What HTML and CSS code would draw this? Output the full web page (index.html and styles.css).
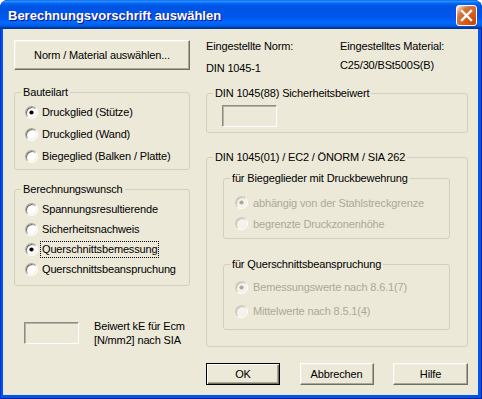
FILE: index.html
```html
<!DOCTYPE html>
<html lang="de">
<head>
<meta charset="utf-8">
<title>Berechnungsvorschrift auswählen</title>
<link rel="stylesheet" href="styles.css">
</head>
<body>
<div class="window">
  <div class="titlebar">
    <span class="title">Berechnungsvorschrift auswählen</span>
    <span class="close">
      <svg width="21" height="21" viewBox="0 0 21 21"><path d="M6 6 L15 15 M15 6 L6 15" stroke="#fff" stroke-width="2.4" stroke-linecap="square"/></svg>
    </span>
  </div>
  <div class="client">
    <div class="col-left">
      <div class="btn btn-wide">Norm / Material auswählen...</div>
      <div class="group g-bauteil">
        <span class="legend">Bauteilart</span>
        <div class="opt"><span class="radio checked"></span><span>Druckglied (Stütze)</span></div>
        <div class="opt"><span class="radio"></span><span>Druckglied (Wand)</span></div>
        <div class="opt"><span class="radio"></span><span>Biegeglied (Balken / Platte)</span></div>
      </div>
      <div class="group g-wunsch">
        <span class="legend">Berechnungswunsch</span>
        <div class="opt"><span class="radio"></span><span>Spannungsresultierende</span></div>
        <div class="opt"><span class="radio"></span><span>Sicherheitsnachweis</span></div>
        <div class="opt"><span class="radio checked"></span><span class="focus">Querschnittsbemessung</span></div>
        <div class="opt"><span class="radio"></span><span>Querschnittsbeanspruchung</span></div>
      </div>
      <div class="ke-row">
        <span class="edit"></span>
        <span class="ke-text">Beiwert kE für Ecm<br>[N/mm2] nach SIA</span>
      </div>
    </div>
    <div class="col-right">
      <div class="info">
        <span>Eingestellte Norm:</span>
        <span>Eingestelltes Material:</span>
        <span class="val-norm">DIN 1045-1</span>
        <span class="val-mat">C25/30/BSt500S(B)</span>
      </div>
      <div class="group g-sicher">
        <span class="legend">DIN 1045(88) Sicherheitsbeiwert</span>
        <span class="edit"></span>
      </div>
      <div class="group g-din">
        <span class="legend">DIN 1045(01) / EC2 / ÖNORM / SIA 262</span>
        <div class="group inner g-biege">
          <span class="legend">für Biegeglieder mit Druckbewehrung</span>
          <div class="opt dis"><span class="radio checked"></span><span>abhängig von der Stahlstreckgrenze</span></div>
          <div class="opt dis"><span class="radio"></span><span>begrenzte Druckzonenhöhe</span></div>
        </div>
        <div class="group inner g-quer">
          <span class="legend">für Querschnittsbeanspruchung</span>
          <div class="opt dis"><span class="radio checked"></span><span>Bemessungswerte nach 8.6.1(7)</span></div>
          <div class="opt dis"><span class="radio"></span><span>Mittelwerte nach 8.5.1(4)</span></div>
        </div>
      </div>
      <div class="buttons">
        <div class="btn btn-default">OK</div>
        <div class="btn">Abbrechen</div>
        <div class="btn btn-hilfe">Hilfe</div>
      </div>
    </div>
  </div>
</div>
</body>
</html>
```
FILE: styles.css
```css
* { box-sizing: border-box; }
html, body { margin: 0; padding: 0; background: #fff; }
body { font-family: "Liberation Sans", Arial, sans-serif; font-size: 11px; letter-spacing: -0.15px; color: #000; }

.window {
  width: 482px;
  height: 399px;
  background: #0055EA;
  border-radius: 8px 8px 0 0;
  box-shadow: inset 1px 0 #0831D9, inset -1px 0 #001EA0, inset 0 -1px #001EA0;
  display: flex;
  flex-direction: column;
  overflow: hidden;
}

.titlebar {
  height: 29px;
  flex: none;
  display: flex;
  align-items: center;
  justify-content: space-between;
  padding: 0 5px 0 8px;
  border-radius: 8px 8px 0 0;
  background: linear-gradient(to bottom, #0058EE 0%, #3593FF 4%, #288EFF 6%, #127DFF 8%, #036FFC 10%, #0262EE 14%, #0057E5 20%, #0054E3 24%, #0055EB 56%, #005BF5 66%, #026AFE 76%, #0062EF 86%, #0052D6 92%, #0040AB 94%, #003092 100%);
}

.title {
  color: #fff;
  font-family: "Liberation Sans", Arial, sans-serif;
  font-weight: bold;
  font-size: 13px;
  letter-spacing: 0;
  text-shadow: 1px 1px #0F1089;
  padding-top: 2px;
}

.close {
  width: 21px;
  height: 21px;
  border: 1px solid #fff;
  border-radius: 3px;
  background: radial-gradient(circle at 90% 90%, #cc4600 0%, #dc6527 55%, #cd7546 70%, #ffccb2 90%, #fff 100%);
  display: flex;
  align-items: center;
  justify-content: center;
  margin-top: 1px;
}
.close svg { display: block; margin: -1px; }

.client {
  flex: 1;
  margin: 0 4px 4px 3px;
  background: #ECE9D8;
  padding: 11px 0 0 11px;
  display: flex;
  gap: 16px;
  align-items: flex-start;
}

.col-left { width: 176px; display: flex; flex-direction: column; }
.col-right { width: 262px; display: flex; flex-direction: column; }

.btn {
  height: 22px;
  display: flex;
  align-items: center;
  justify-content: center;
  background: #ECE9D8;
  border: 1px solid;
  border-color: #fff #716F64 #716F64 #fff;
  box-shadow: inset -1px -1px #ACA899, inset 1px 1px #F1EFE2;
}
.btn-wide { height: 30px; }
.btn-default {
  border-color: #000;
  box-shadow: inset 1px 1px #fff, inset -1px -1px #716F64, inset -2px -2px #ACA899;
}

.group {
  position: relative;
  border: 1px solid #D0D0BF;
  border-radius: 3px;
}
.legend {
  position: absolute;
  top: -7px;
  left: 6px;
  line-height: 13px;
  padding: 0 2px;
  background: #ECE9D8;
  white-space: nowrap;
}

.opt {
  display: flex;
  align-items: center;
  gap: 4px;
  height: 22px;
  white-space: nowrap;
}
.radio {
  width: 13px;
  height: 13px;
  flex: none;
  border-radius: 50%;
  border: 1px solid;
  border-color: #ACA899 #fff #fff #ACA899;
  box-shadow: inset 1px 1px #716F64, inset -1px -1px #F1EFE2;
  background: #fff;
  position: relative;
}
.radio.checked::after {
  content: "";
  position: absolute;
  left: 4px;
  top: 4px;
  width: 3px;
  height: 3px;
  border-radius: 50%;
  background: #000;
  box-shadow: 0 0 0 0.6px #000;
}
.opt.dis { color: #ACA899; gap: 5px; }
.opt.dis .radio { background: #F4F3EC; border-color: #CFCDC2 #fff #fff #CFCDC2; box-shadow: inset 1px 1px #C4C2B5, inset -1px -1px #F1EFE2; }
.opt.dis .radio.checked::after { background: #ACA899; box-shadow: 0 0 0 0.6px #ACA899; }

.focus { outline: 1px dotted #000; padding: 0 1px; margin-left: -1px; line-height: 15px; }

.g-bauteil { margin-top: 22px; height: 78px; padding: 8px 0 0 10px; }
.g-wunsch { margin-top: 19px; height: 97px; padding: 9px 0 0 10px; }
.g-wunsch .opt { height: 20px; }

.ke-row { display: flex; align-items: flex-start; margin-top: 36px; padding-left: 10px; gap: 15px; }
.edit {
  display: block;
  width: 55px;
  height: 22px;
  flex: none;
  background: #ECE9D8;
  border: 1px solid;
  border-color: #8E8C82 #fff #fff #8E8C82;
  box-shadow: inset 1px 1px #B5B3A8;
}
.ke-text { line-height: 14px; margin-top: -3px; }

.info {
  display: grid;
  grid-template-columns: 134px 1fr;
  row-gap: 8px;
  line-height: 13px;
  margin-top: 0;
}
.val-norm { margin-top: 1px; }
.val-mat { margin-top: -2px; }

.g-sicher { margin-top: 18px; height: 40px; padding: 11px 0 0 15px; }

.g-din { margin-top: 24px; height: 190px; padding: 20px 17px 0 16px; }
.inner { width: 227px; }
.g-biege { height: 61px; padding: 13px 0 0 11px; }
.g-biege .opt { height: 21px; }
.g-quer { margin-top: 25px; height: 66px; padding: 10px 0 0 11px; }
.g-quer .opt { height: 24px; }

.buttons { margin-top: 16px; display: flex; justify-content: space-between; }
.buttons .btn { width: 74px; }
.buttons .btn-hilfe { width: 75px; }
```
